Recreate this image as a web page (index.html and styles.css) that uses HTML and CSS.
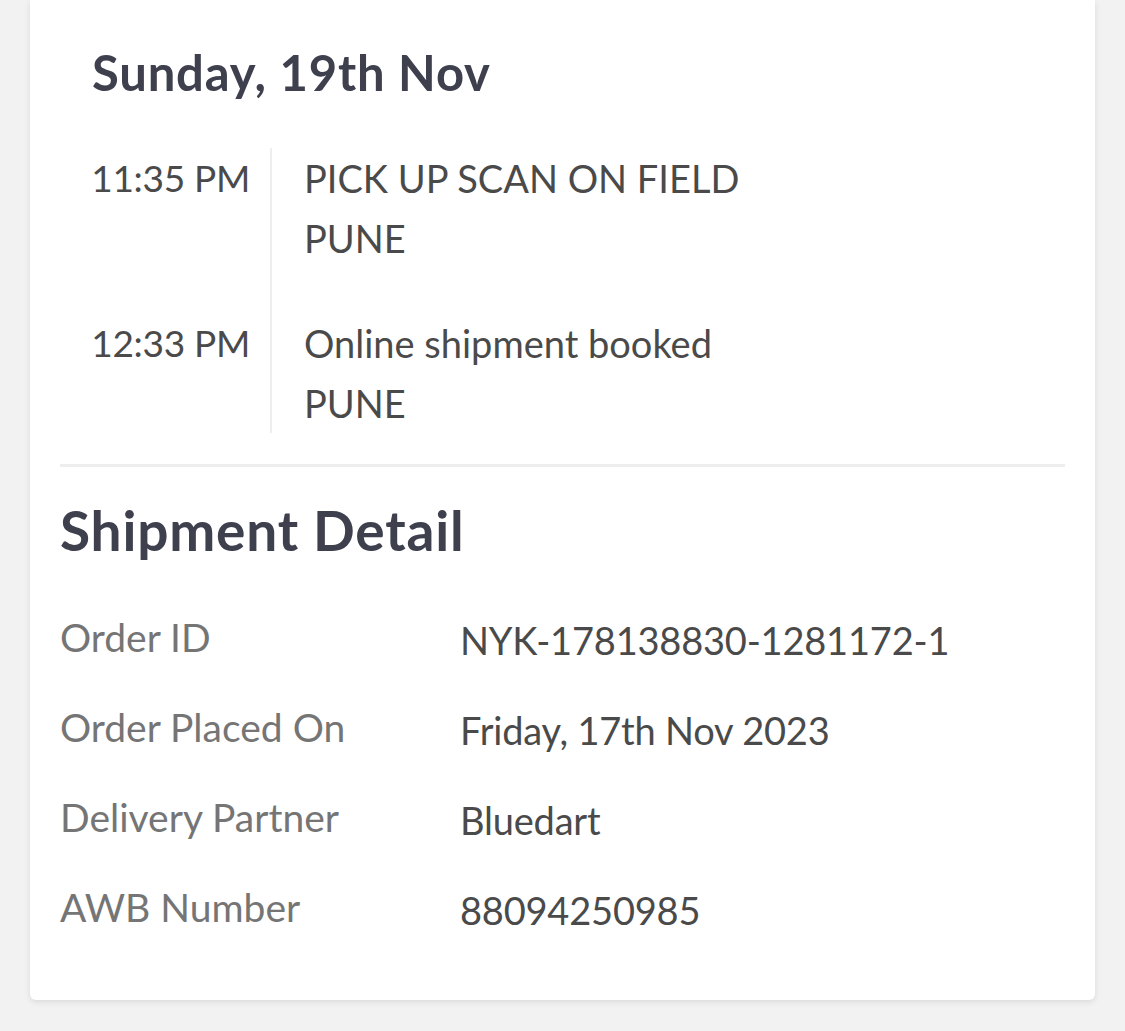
FILE: index.html
```html
<!DOCTYPE html>
<html>
<head>
<meta charset="utf-8">
<link rel="stylesheet" href="styles.css">
</head>
<body>
<div class="card">
  <section class="tracking">
    <h2 class="day">Sunday, 19th Nov</h2>
    <div class="timeline">
      <div class="event">
        <div class="time">11:35 PM</div>
        <div class="info">
          <div>PICK UP SCAN ON FIELD</div>
          <div>PUNE</div>
        </div>
      </div>
      <div class="event">
        <div class="time">12:33 PM</div>
        <div class="info">
          <div>Online shipment booked</div>
          <div>PUNE</div>
        </div>
      </div>
    </div>
  </section>
  <section class="details">
    <h2 class="title">Shipment Detail</h2>
    <div class="row"><div class="label">Order ID</div><div class="value">NYK-178138830-1281172-1</div></div>
    <div class="row"><div class="label">Order Placed On</div><div class="value">Friday, 17th Nov 2023</div></div>
    <div class="row"><div class="label">Delivery Partner</div><div class="value">Bluedart</div></div>
    <div class="row"><div class="label">AWB Number</div><div class="value">88094250985</div></div>
  </section>
</div>
</body>
</html>
```
FILE: styles.css
```css
html, body {
  margin: 0;
  padding: 0;
  background: #f2f2f2;
}
body {
  font-family: Lato, "Noto Sans", sans-serif;
  width: 1125px;
  height: 1031px;
  overflow: hidden;
}
.card {
  margin: 0 30px;
  width: 1065px;
  height: 1000px;
  box-sizing: border-box;
  background: #fff;
  border-radius: 0 0 6px 6px;
  box-shadow: 0 2px 6px rgba(0,0,0,0.10);
  padding: 0 30px;
}
.tracking {
  border-bottom: 3px solid #eeeeee;
  padding-bottom: 31px;
}
.day {
  margin: 0;
  padding: 44px 0 0 32px;
  font-size: 49px;
  line-height: 56px;
  font-weight: 700;
  color: #3e404e;
  letter-spacing: 0.8px;
}
.timeline {
  margin-top: 48px;
  display: flex;
  flex-direction: column;
}
.event {
  display: flex;
}
.time {
  flex: none;
  width: 212px;
  text-align: right;
  padding-right: 20px;
  border-right: 2px solid #eeeeee;
  box-sizing: border-box;
  font-size: 37px;
  line-height: 60px;
  color: #4a4a4a;
  letter-spacing: -0.3px;
}
.info {
  padding-left: 32px;
  font-size: 38px;
  line-height: 60px;
  color: #4a4a4a;
}
.event:not(:last-child) .time,
.event:not(:last-child) .info {
  padding-bottom: 45px;
}
.title {
  margin: 0;
  padding-top: 33px;
  font-size: 55px;
  line-height: 60px;
  font-weight: 700;
  color: #3e404e;
  letter-spacing: 0.8px;
}
.row {
  display: flex;
  height: 90px;
  align-items: center;
}
.title + .row { margin-top: 32px; }
.label {
  width: 400px;
  flex: none;
  font-size: 39px;
  color: #757575;
}
.value {
  font-size: 38px;
  color: #4a4a4a;
  padding-top: 6px;
  letter-spacing: -0.2px;
}
```
